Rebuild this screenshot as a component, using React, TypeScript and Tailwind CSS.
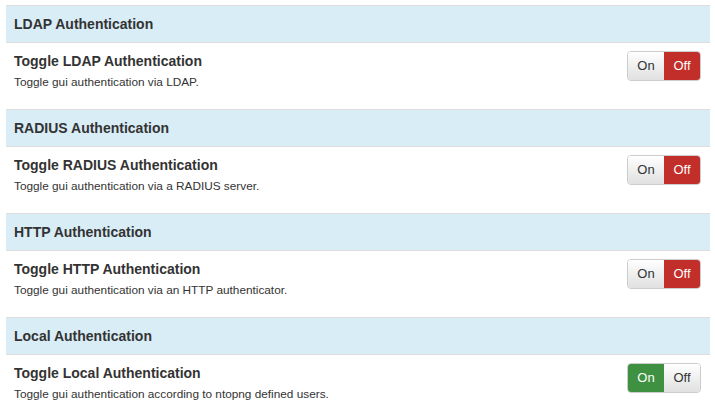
import React, { useState } from 'react';

type Section = {
  header: string;
  title: string;
  desc: string;
  on: boolean;
};

const SECTIONS: Section[] = [
  { header: 'LDAP Authentication', title: 'Toggle LDAP Authentication', desc: 'Toggle gui authentication via LDAP.', on: false },
  { header: 'RADIUS Authentication', title: 'Toggle RADIUS Authentication', desc: 'Toggle gui authentication via a RADIUS server.', on: false },
  { header: 'HTTP Authentication', title: 'Toggle HTTP Authentication', desc: 'Toggle gui authentication via an HTTP authenticator.', on: false },
  { header: 'Local Authentication', title: 'Toggle Local Authentication', desc: 'Toggle gui authentication according to ntopng defined users.', on: true },
];

const Toggle = ({ initial }: { initial: boolean }) => {
  const [on, setOn] = useState(initial);
  const idle = 'bg-gradient-to-b from-white to-[#e0e0e0] text-[#333]';
  return (
    <div className="flex h-[30px] rounded-[4px] border border-[#ccc] overflow-hidden text-[13px]">
      <button
        onClick={() => setOn(true)}
        className={`w-[36px] flex items-center justify-center ${on ? 'bg-[#3d9140] text-white' : idle}`}
      >
        On
      </button>
      <button
        onClick={() => setOn(false)}
        className={`w-[36px] flex items-center justify-center ${on ? idle : 'bg-[#c22e29] text-white'}`}
      >
        Off
      </button>
    </div>
  );
};

const App: React.FC = () => {
  return (
    <div className="min-h-screen bg-white pt-[5px] px-[6px] font-['Liberation_Sans',Arial,sans-serif] text-[#333]">
      <div className="w-[704px]">
        {SECTIONS.map((s) => (
          <div key={s.header}>
            <div className="h-[37px] border-t border-[#ddd] bg-[#d9edf7] px-[8px] flex items-center">
              <span className="text-[14px] font-bold leading-5">{s.header}</span>
            </div>
            <div className="h-[67px] border-t border-[#ddd] px-[8px] pt-[8px] flex justify-between">
              <div>
                <div className="text-[14px] font-bold leading-5">{s.title}</div>
                <div className="text-[11.8px] leading-4 mt-[3px]">{s.desc}</div>
              </div>
              <div className="mr-[1px]">
                <Toggle initial={s.on} />
              </div>
            </div>
          </div>
        ))}
      </div>
    </div>
  );
};

export default App;
